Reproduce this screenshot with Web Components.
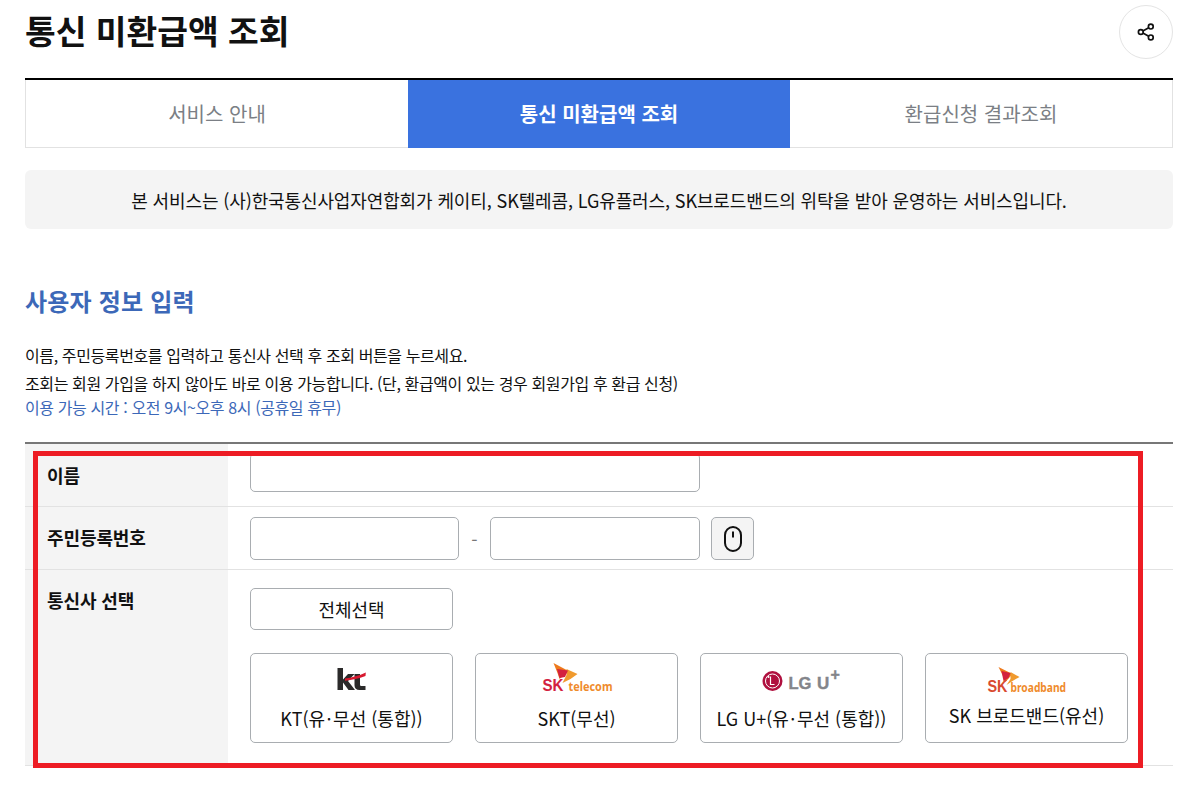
<!DOCTYPE html>
<html lang="ko">
<head>
<meta charset="utf-8">
<title>통신 미환급액 조회</title>
<style>
  html, body { margin: 0; background: #fff; }
  body { font-family: "Noto Sans CJK KR", "Noto Sans", sans-serif; color: #111; }
</style>
</head>
<body>
<refund-page>
  <page-title slot="title">통신 미환급액 조회</page-title>
  <tab-bar slot="tabs">
    <tab-item>서비스 안내</tab-item>
    <tab-item active>통신 미환급액 조회</tab-item>
    <tab-item>환급신청 결과조회</tab-item>
  </tab-bar>
  <notice-box slot="notice">본 서비스는 (사)한국통신사업자연합회가 케이티, SK텔레콤, LG유플러스, SK브로드밴드의 위탁을 받아 운영하는 서비스입니다.</notice-box>
  <user-intro slot="intro"></user-intro>
  <refund-form slot="form"></refund-form>
</refund-page>

<script>
const pageTemplate = document.createElement('template');
pageTemplate.innerHTML = `
  <style>
    :host { display: block; position: relative; width: 1195px; height: 811px; overflow: hidden; }
    main { padding: 0 22px 0 25px; }
    .mark {
      position: absolute; left: 33px; top: 451px; width: 1110px; height: 317px;
      box-sizing: border-box; border: 5px solid #ed1c24; pointer-events: none;
    }
  </style>
  <main>
    <slot name="title"></slot>
    <slot name="tabs"></slot>
    <slot name="notice"></slot>
    <slot name="intro"></slot>
    <slot name="form"></slot>
  </main>
  <div class="mark"></div>
`;
class RefundPage extends HTMLElement {
  constructor() {
    super();
    this.attachShadow({ mode: 'open' }).appendChild(pageTemplate.content.cloneNode(true));
  }
}
customElements.define('refund-page', RefundPage);

const titleTemplate = document.createElement('template');
titleTemplate.innerHTML = `
  <style>
    :host { display: flex; justify-content: space-between; align-items: flex-start; height: 78px; }
    h1 { margin: 6px 0 0; font-size: 33.400px; line-height: 48px; font-weight: 700; color: #111; }
    button {
      width: 54px; height: 54px; margin: 5px 0 0; padding: 0; border: 1px solid #e4e4e4; border-radius: 50%;
      background: #fff; display: flex; align-items: center; justify-content: center;
    }
  </style>
  <h1><slot></slot></h1>
  <button type="button" aria-label="공유">
    <svg width="20" height="20" viewBox="0 0 20 20" fill="none" stroke="#111" stroke-width="1.700">
      <circle cx="14.800" cy="4.600" r="2.400"/>
      <circle cx="4.800" cy="10" r="2.400"/>
      <circle cx="14.800" cy="15.400" r="2.400"/>
      <path d="M6.900 8.900 12.700 5.700M6.900 11.100 12.700 14.300"/>
    </svg>
  </button>
`;
customElements.define('page-title', class extends HTMLElement {
  constructor() {
    super();
    this.attachShadow({ mode: 'open' }).appendChild(titleTemplate.content.cloneNode(true));
  }
});

const tabBarTemplate = document.createElement('template');
tabBarTemplate.innerHTML = `
  <style>
    :host { display: grid; grid-template-columns: 383px 382px 383px; height: 70px; border-top: 2px solid #000; box-sizing: border-box; }
  </style>
  <slot></slot>
`;
customElements.define('tab-bar', class extends HTMLElement {
  constructor() {
    super();
    this.attachShadow({ mode: 'open' }).appendChild(tabBarTemplate.content.cloneNode(true));
  }
});

const tabItemTemplate = document.createElement('template');
tabItemTemplate.innerHTML = `
  <style>
    :host {
      display: flex; align-items: center; justify-content: center; box-sizing: border-box;
      font-size: 20px; color: #7b7f85; border-bottom: 1px solid #e2e2e2;
    }
    :host(:first-child) { border-left: 1px solid #e2e2e2; }
    :host(:last-child) { border-right: 1px solid #e2e2e2; }
    :host([active]) { background: #3a72df; color: #fff; font-weight: 700; border-bottom-color: #3a72df; }
  </style>
  <slot></slot>
`;
customElements.define('tab-item', class extends HTMLElement {
  constructor() {
    super();
    this.attachShadow({ mode: 'open' }).appendChild(tabItemTemplate.content.cloneNode(true));
  }
});

const noticeTemplate = document.createElement('template');
noticeTemplate.innerHTML = `
  <style>
    :host {
      display: flex; align-items: center; justify-content: center; height: 59px; margin-top: 22px;
      background: #f4f4f4; border-radius: 6px; font-size: 18px; letter-spacing: -0.120px; color: #111;
    }
  </style>
  <slot></slot>
`;
customElements.define('notice-box', class extends HTMLElement {
  constructor() {
    super();
    this.attachShadow({ mode: 'open' }).appendChild(noticeTemplate.content.cloneNode(true));
  }
});

const introTemplate = document.createElement('template');
introTemplate.innerHTML = `
  <style>
    :host { display: block; }
    h2 { margin: 55px 0 0; font-size: 24px; line-height: 34px; font-weight: 700; letter-spacing: 0.200px; color: #3c68b8; }
    p { margin: 0; font-size: 16px; letter-spacing: -0.390px; color: #111; }
    .first { margin-top: 23px; line-height: 28px; }
    .second { line-height: 28px; }
    .time { line-height: 20px; color: #3c68b8; }
  </style>
  <h2>사용자 정보 입력</h2>
  <p class="first">이름, 주민등록번호를 입력하고 통신사 선택 후 조회 버튼을 누르세요.</p>
  <p class="second">조회는 회원 가입을 하지 않아도 바로 이용 가능합니다. (단, 환급액이 있는 경우 회원가입 후 환급 신청)</p>
  <p class="time">이용 가능 시간 : 오전 9시~오후 8시 (공휴일 휴무)</p>
`;
customElements.define('user-intro', class extends HTMLElement {
  constructor() {
    super();
    this.attachShadow({ mode: 'open' }).appendChild(introTemplate.content.cloneNode(true));
  }
});

const rowTemplate = document.createElement('template');
rowTemplate.innerHTML = `
  <style>
    :host { display: grid; grid-template-columns: 203px 1fr; border-bottom: 1px solid #e2e2e2; }
    .label { background: #f4f4f4; padding: 0 22px 3px; font-size: 18px; font-weight: 700; letter-spacing: -0.100px; color: #111; display: flex; align-items: center; }
    :host([first]) .label { padding-bottom: 0; }
    :host([top]) .label { align-items: flex-start; padding: 17px 22px 0; }
    .field { padding: 10px 22px 9px; display: flex; align-items: center; gap: 11px; }
    :host([first]) .field { padding: 9px 22px 14px; }
    :host([top]) .field { padding: 18px 22px 22px; display: block; }
  </style>
  <div class="label"></div>
  <div class="field"><slot></slot></div>
`;
customElements.define('form-row', class extends HTMLElement {
  constructor() {
    super();
    this.attachShadow({ mode: 'open' }).appendChild(rowTemplate.content.cloneNode(true));
    this.shadowRoot.querySelector('.label').textContent = this.getAttribute('label');
  }
});

const cardTemplate = document.createElement('template');
cardTemplate.innerHTML = `
  <style>
    :host {
      display: flex; flex-direction: column; align-items: center; box-sizing: border-box; height: 90px;
      border: 1px solid #a9adb1; border-radius: 5px; background: #fff; font-size: 18px; color: #111;
    }
    .logo { height: 41px; margin-top: 8px; display: flex; align-items: flex-start; justify-content: center; }
    .name { line-height: 24px; margin-top: 3px; white-space: nowrap; }
    :host([lifted]) .name { margin-top: 0; }
  </style>
  <div class="logo"><slot name="logo"></slot></div>
  <div class="name"><slot></slot></div>
`;
customElements.define('carrier-card', class extends HTMLElement {
  constructor() {
    super();
    this.attachShadow({ mode: 'open' }).appendChild(cardTemplate.content.cloneNode(true));
  }
});

const formTemplate = document.createElement('template');
formTemplate.innerHTML = `
  <style>
    :host { display: block; margin-top: 25px; border-top: 2px solid #777; }
    input {
      box-sizing: border-box; height: 43px; border: 1px solid #a9adb1; border-radius: 5px;
      background: #fff; padding: 0 10px; margin: 0; display: block; font: inherit;
    }
    .name { width: 450px; height: 39px; }
    .rrn { width: 209px; }
    .rrn.back { width: 210px; }
    .dash { width: 9px; text-align: center; color: #777; font-size: 18px; }
    .mouse {
      width: 43px; height: 43px; box-sizing: border-box; padding: 0; border: 1px solid #a9adb1; border-radius: 5px;
      background: #f4f4f4; display: flex; align-items: center; justify-content: center;
    }
    .all {
      display: block; width: 203px; height: 42px; box-sizing: border-box; border: 1px solid #a9adb1; border-radius: 5px;
      background: #fff; font: inherit; font-size: 18px; color: #111; padding: 0;
    }
    .cards { display: grid; grid-template-columns: repeat(4, 203px); column-gap: 22px; margin-top: 23px; }
    .dot { margin: 0 1.500px; }
    svg text { font-family: "Liberation Sans", "Noto Sans", sans-serif; font-weight: 700; }
    svg text.round { font-family: "Noto Sans", "Liberation Sans", sans-serif; }
  </style>
  <form-row first label="이름">
    <input class="name" type="text" aria-label="이름">
  </form-row>
  <form-row label="주민등록번호">
    <input class="rrn" type="text" aria-label="주민등록번호 앞자리">
    <span class="dash">-</span>
    <input class="rrn back" type="password" aria-label="주민등록번호 뒷자리">
    <button class="mouse" type="button" aria-label="마우스 입력">
      <svg width="18" height="26" viewBox="0 0 18 26" fill="none" stroke="#111" stroke-width="2">
        <rect x="1" y="1" width="16" height="24" rx="8"/>
        <path d="M9 5.500v6"/>
      </svg>
    </button>
  </form-row>
  <form-row top label="통신사 선택">
    <button class="all" type="button">전체선택</button>
    <div class="cards">
      <carrier-card>
        <svg slot="logo" width="34" height="32" viewBox="0 0 34 32">
          <path d="M2.500 6h5.500v11.500l5-5.500h6.500l-6.500 7 7 9h-6.500l-5.500-7.500v7.500h-5.500z" fill="#2b2a2a"/>
          <path d="M19.500 12h5.500v10.500c0 1 .6 1.500 1.700 1.500h3.800v4h-6c-3.300 0-5-1.700-5-4.800z" fill="#2b2a2a"/>
          <path d="M10 16.500C17 15.700 24 13.600 30.800 10.500l-.3 3.600C24 16.600 17 18.100 10 18.700z" fill="#d8182f"/>
        </svg>
        KT(유<span class="dot">·</span>무선 (통합))
      </carrier-card>
      <carrier-card>
        <svg slot="logo" width="94" height="32" viewBox="-10 0 94 32">
          <path d="M13.500 1 28.500 9l-9 8-2-6z" fill="#ee7a1c"/>
          <path d="M26.500 7 37.500 12l-7 5-8 4 4-8z" fill="#f09a2e"/>
          <path d="M17 7l11 1.500-3 6.500-5.500 1z" fill="#d3213f"/>
          <text x="2.500" y="29" font-size="16.500" fill="#d3213f" textLength="21" lengthAdjust="spacingAndGlyphs">SK</text>
          <text class="round" x="28.500" y="29" font-size="12.500" fill="#ef8b2c" textLength="44" lengthAdjust="spacingAndGlyphs">telecom</text>
        </svg>
        SKT(무선)
      </carrier-card>
      <carrier-card>
        <svg slot="logo" width="80" height="32" viewBox="0 0 80 32">
          <circle cx="10.500" cy="19" r="10" fill="#b0103f"/>
          <circle cx="10.500" cy="19" r="7" fill="none" stroke="#fff" stroke-width="1"/>
          <path d="M8.500 14.500v8h4" fill="none" stroke="#fff" stroke-width="1.200"/>
          <circle cx="6.500" cy="15" r="1" fill="#fff"/>
          <g stroke="#83858a" stroke-width="0.400">
            <text x="26.500" y="26.500" font-size="17" fill="#83858a" textLength="23" lengthAdjust="spacingAndGlyphs">LG</text>
            <text x="55" y="26.500" font-size="17" fill="#83858a">U</text>
            <text x="68.500" y="18" font-size="16" fill="#83858a">+</text>
          </g>
        </svg>
        LG U+(유<span class="dot">·</span>무선 (통합))
      </carrier-card>
      <carrier-card lifted>
        <svg slot="logo" width="116" height="32" viewBox="-16 0 116 32">
          <path d="M13.500 5 27.500 12l-7 8-3-7z" fill="#ee7a1c"/>
          <path d="M25.500 10 34.500 15l-7 4-6 4 4-6z" fill="#f09a2e"/>
          <path d="M16.500 9l9 2-2 5-5 3z" fill="#d3213f"/>
          <text x="2.500" y="30" font-size="16" fill="#d94a30" textLength="20" lengthAdjust="spacingAndGlyphs">SK</text>
          <text class="round" transform="translate(25.500 30) scale(.82 1)" font-size="12.500" fill="#ef8b2c">broadband</text>
        </svg>
        SK 브로드밴드(유선)
      </carrier-card>
    </div>
  </form-row>
`;
customElements.define('refund-form', class extends HTMLElement {
  constructor() {
    super();
    this.attachShadow({ mode: 'open' }).appendChild(formTemplate.content.cloneNode(true));
  }
});
</script>
</body>
</html>
